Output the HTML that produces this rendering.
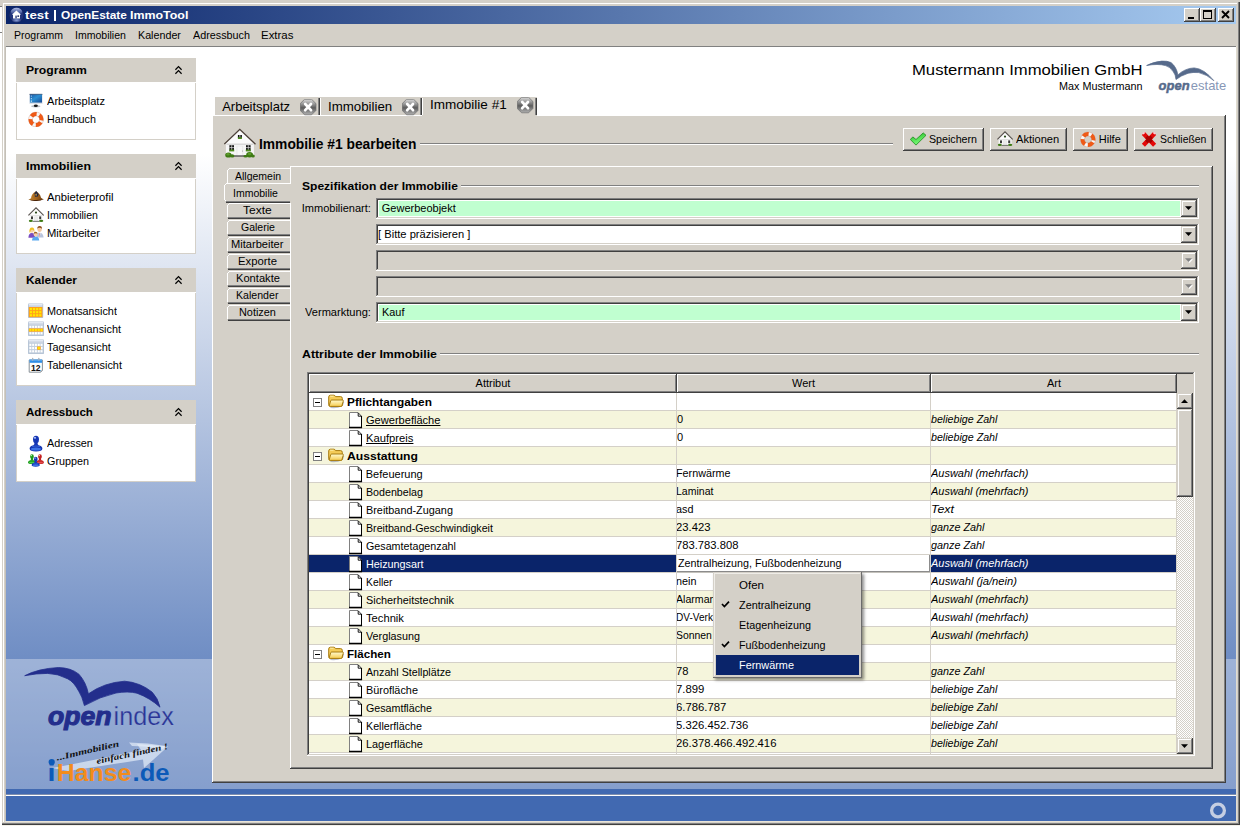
<!DOCTYPE html>
<html><head><meta charset="utf-8"><title>test | OpenEstate ImmoTool</title><style>
html,body{margin:0;padding:0}
body{width:1240px;height:826px;overflow:hidden;position:relative;background:#d4d0c8;font-family:"Liberation Sans",sans-serif;font-size:11px}
div,svg,span.t{position:absolute;display:block}
span.t{white-space:nowrap;transform-origin:0 50%}
</style></head><body>
<div style="left:3px;top:3px;width:1234px;height:1px;background:#ffffff"></div>
<div style="left:3px;top:3px;width:1px;height:819px;background:#ffffff"></div>
<div style="left:1238px;top:2px;width:1px;height:822px;background:#808080"></div>
<div style="left:1239px;top:2px;width:1px;height:823px;background:#404040"></div>
<div style="left:2px;top:823px;width:1237px;height:1px;background:#808080"></div>
<div style="left:2px;top:824px;width:1238px;height:1px;background:#404040"></div>
<div style="left:0px;top:825px;width:1240px;height:1px;background:#f4f2ea"></div>
<div style="left:0px;top:7px;width:2px;height:819px;background:#fff"></div>
<div style="left:0px;top:6px;width:2px;height:1px;background:#808080"></div>
<div style="left:0px;top:32px;width:2px;height:1px;background:#808080"></div>
<div style="left:6px;top:6px;width:1230px;height:18px;background:linear-gradient(to right,#0a246a 0%,#a6caf0 100%)"></div>
<svg style="left:9px;top:7px" width="15" height="16" viewBox="0 0 15 16"><defs><linearGradient id="tg" x1="0" y1="0" x2="0" y2="1"><stop offset="0" stop-color="#b8c6ee" stop-opacity="0.95"/><stop offset="1" stop-color="#6a80c0" stop-opacity="0.15"/></linearGradient><radialGradient id="tg2" cx="50%" cy="50%" r="50%"><stop offset="0" stop-color="#9fb6ec" stop-opacity="0.85"/><stop offset="1" stop-color="#9fb6ec" stop-opacity="0"/></radialGradient></defs>
<circle cx="7.5" cy="8" r="7.4" fill="#18265e"/><circle cx="7.5" cy="8" r="7" fill="#22347a"/><ellipse cx="7.5" cy="4.6" rx="5.6" ry="3.8" fill="url(#tg)"/><ellipse cx="7.5" cy="13.2" rx="5" ry="2.6" fill="url(#tg2)"/>
<path d="M7.4 3.6 L2.9 7.8 H4 V11.4 H11 V7.8 H12 Z" fill="#fff"/><rect x="6.3" y="8.6" width="1.5" height="2.8" fill="#3a4a86"/><rect x="8.4" y="8.4" width="1.7" height="1.5" fill="#1c2a60"/></svg>
<span class="t" style="left:24.98px;top:8px;font-size:11px;line-height:14px;color:#fff;font-weight:bold;transform:scaleX(1.2130);">test</span>
<div style="left:54px;top:10px;width:2px;height:11px;background:#fff"></div>
<span class="t" style="left:61.28px;top:8px;font-size:11px;line-height:14px;color:#fff;font-weight:bold;transform:scaleX(1.0783);">OpenEstate</span>
<span class="t" style="left:129.69px;top:8px;font-size:11px;line-height:14px;color:#fff;font-weight:bold;transform:scaleX(1.1275);">ImmoTool</span>
<div style="left:1184px;top:8px;width:16px;height:14px;background:#d4d0c8"></div>
<div style="left:1184px;top:8px;width:15px;height:1px;background:#ffffff"></div>
<div style="left:1184px;top:8px;width:1px;height:13px;background:#ffffff"></div>
<div style="left:1184px;top:21px;width:16px;height:1px;background:#404040"></div>
<div style="left:1199px;top:8px;width:1px;height:14px;background:#404040"></div>
<div style="left:1185px;top:20px;width:14px;height:1px;background:#808080"></div>
<div style="left:1198px;top:9px;width:1px;height:12px;background:#808080"></div>
<svg style="left:1184px;top:8px" width="16" height="14" viewBox="0 0 16 14"><rect x="4" y="9" width="6" height="2" fill="#000"/></svg>
<div style="left:1200px;top:8px;width:16px;height:14px;background:#d4d0c8"></div>
<div style="left:1200px;top:8px;width:15px;height:1px;background:#ffffff"></div>
<div style="left:1200px;top:8px;width:1px;height:13px;background:#ffffff"></div>
<div style="left:1200px;top:21px;width:16px;height:1px;background:#404040"></div>
<div style="left:1215px;top:8px;width:1px;height:14px;background:#404040"></div>
<div style="left:1201px;top:20px;width:14px;height:1px;background:#808080"></div>
<div style="left:1214px;top:9px;width:1px;height:12px;background:#808080"></div>
<svg style="left:1200px;top:8px" width="16" height="14" viewBox="0 0 16 14"><rect x="3.5" y="2.5" width="8" height="8" fill="none" stroke="#000"/><rect x="3" y="2" width="9" height="2" fill="#000"/></svg>
<div style="left:1218px;top:8px;width:16px;height:14px;background:#d4d0c8"></div>
<div style="left:1218px;top:8px;width:15px;height:1px;background:#ffffff"></div>
<div style="left:1218px;top:8px;width:1px;height:13px;background:#ffffff"></div>
<div style="left:1218px;top:21px;width:16px;height:1px;background:#404040"></div>
<div style="left:1233px;top:8px;width:1px;height:14px;background:#404040"></div>
<div style="left:1219px;top:20px;width:14px;height:1px;background:#808080"></div>
<div style="left:1232px;top:9px;width:1px;height:12px;background:#808080"></div>
<svg style="left:1218px;top:8px" width="16" height="14" viewBox="0 0 16 14"><path d="M4 3 L11 10 M11 3 L4 10" stroke="#000" stroke-width="1.9"/></svg>
<span class="t" style="left:13.79px;top:28px;font-size:11px;line-height:14px;color:#000;transform:scaleX(0.9530);">Programm</span>
<span class="t" style="left:75.28px;top:28px;font-size:11px;line-height:14px;color:#000;transform:scaleX(0.9576);">Immobilien</span>
<span class="t" style="left:137.78px;top:28px;font-size:11px;line-height:14px;color:#000;transform:scaleX(0.9746);">Kalender</span>
<span class="t" style="left:193.28px;top:28px;font-size:11px;line-height:14px;color:#000;transform:scaleX(0.9800);">Adressbuch</span>
<span class="t" style="left:261.29px;top:28px;font-size:11px;line-height:14px;color:#000;transform:scaleX(1.0398);">Extras</span>
<div style="left:6px;top:46px;width:1230px;height:1px;background:#808080"></div>
<div style="left:5px;top:46px;width:1px;height:776px;background:#c4c0b8"></div>
<div style="left:6px;top:47px;width:1230px;height:774px;background:linear-gradient(to bottom,#fff 0,#fff 107px,#4169b1 774px)"></div>
<div style="left:1236px;top:46px;width:1px;height:776px;background:#e0dcd0"></div>
<div style="left:5px;top:821px;width:1232px;height:1px;background:#e8e4d8"></div>
<div style="left:6px;top:659px;width:1230px;height:130px;background:rgba(255,255,255,0.33)"></div>
<div style="left:6px;top:789px;width:1230px;height:6px;background:#4169b1"></div>
<div style="left:6px;top:794px;width:1230px;height:1px;background:#7f8fae"></div>
<div style="left:6px;top:795px;width:1230px;height:1px;background:#fff"></div>
<div style="left:6px;top:796px;width:1230px;height:25px;background:#4169b1"></div>
<svg style="left:1208px;top:800px" width="20" height="20" viewBox="0 0 20 20"><circle cx="10" cy="10.5" r="6.4" fill="none" stroke="#c5cee2" stroke-width="3.3"/></svg>
<div style="left:16px;top:58px;width:180px;height:24px;background:#d4d0c8"></div>
<span class="t" style="left:25.79px;top:63px;font-size:11px;line-height:14px;color:#000;font-weight:bold;transform:scaleX(1.1072);">Programm</span>
<svg style="left:174px;top:65px" width="10" height="12" viewBox="0 0 10 12"><path d="M1.4 4.7 L4.5 1.6 L7.6 4.7 M1.4 8.7 L4.5 5.6 L7.6 8.7" fill="none" stroke="#000" stroke-width="1.25"/></svg>
<div style="left:16px;top:83px;width:180px;height:57px;background:#fff;border:1px solid #d4d0c8;border-top:none;box-sizing:border-box"></div>
<div style="left:16px;top:82px;width:180px;height:1px;background:#fff"></div>
<svg style="left:28px;top:93px" width="16" height="16" viewBox="0 0 16 16"><defs><linearGradient id="g1" x1="0" y1="0" x2="1" y2="1"><stop offset="0" stop-color="#1a58a4"/><stop offset="0.45" stop-color="#2d8fd2"/><stop offset="1" stop-color="#174a94"/></linearGradient></defs>
<ellipse cx="7.8" cy="13.3" rx="4.6" ry="1.1" fill="#b8bcc4"/><ellipse cx="7.8" cy="12.7" rx="2" ry="1.3" fill="#181818"/>
<rect x="1.3" y="0.7" width="13.3" height="10.4" rx="0.6" fill="#dfe3ea"/><rect x="1.6" y="0.9" width="12.7" height="0.9" fill="#2a3a58"/><rect x="1.9" y="1.6" width="12.1" height="8" fill="url(#g1)"/>
<rect x="2.8" y="2.6" width="1" height="1" fill="#cfe4f8"/><rect x="2.8" y="5.2" width="1" height="1" fill="#e8f2fc"/><rect x="2.8" y="7.6" width="1.1" height="1.1" fill="#f4f8fc"/></svg>
<span class="t" style="left:46.78px;top:94px;font-size:11px;line-height:14px;color:#000;transform:scaleX(1.0078);">Arbeitsplatz</span>
<svg style="left:28px;top:111px" width="16" height="16" viewBox="0 0 16 16"><g transform="rotate(15 8 8.5)"><circle cx="8" cy="8.5" r="5.5" fill="none" stroke="#f7f7f7" stroke-width="3.9"/><circle cx="8" cy="8.5" r="5.5" fill="none" stroke="#f05a16" stroke-width="3.9" stroke-dasharray="5.6 3.04" stroke-dashoffset="-1.52"/><circle cx="8" cy="8.5" r="7.45" fill="none" stroke="#c06848" stroke-opacity="0.5" stroke-width="0.5"/><circle cx="8" cy="8.5" r="3.55" fill="none" stroke="#a86048" stroke-opacity="0.5" stroke-width="0.5"/></g></svg>
<span class="t" style="left:46.78px;top:112px;font-size:11px;line-height:14px;color:#000;transform:scaleX(0.9756);">Handbuch</span>
<div style="left:16px;top:154px;width:180px;height:24px;background:#d4d0c8"></div>
<span class="t" style="left:25.79px;top:159px;font-size:11px;line-height:14px;color:#000;font-weight:bold;transform:scaleX(1.1183);">Immobilien</span>
<svg style="left:174px;top:161px" width="10" height="12" viewBox="0 0 10 12"><path d="M1.4 4.7 L4.5 1.6 L7.6 4.7 M1.4 8.7 L4.5 5.6 L7.6 8.7" fill="none" stroke="#000" stroke-width="1.25"/></svg>
<div style="left:16px;top:179px;width:180px;height:75px;background:#fff;border:1px solid #d4d0c8;border-top:none;box-sizing:border-box"></div>
<div style="left:16px;top:178px;width:180px;height:1px;background:#fff"></div>
<svg style="left:28px;top:189px" width="16" height="16" viewBox="0 0 16 16"><defs><linearGradient id="g2" x1="0" y1="0" x2="1" y2="0"><stop offset="0" stop-color="#c88a34"/><stop offset="0.45" stop-color="#a8681e"/><stop offset="1" stop-color="#6a3a10"/></linearGradient></defs>
<path d="M0.4 10.6 Q2 10.2 3 9.2 Q3.6 4.4 7.6 2.4 Q12 3.6 13 8.8 Q14.4 10 15.8 10.2 Q12 11.8 8 11.6 Q3.4 11.8 0.4 10.6 Z" fill="url(#g2)"/>
<path d="M0.4 10.6 Q3.4 11.2 8 11 Q12 11 15.8 10.2 Q12 12.2 8 12 Q3.4 12.2 0.4 10.6 Z" fill="#4a2408"/>
<path d="M6.6 4.2 L8.2 1.8 L9.4 3.6 L10.4 5.2 L9.8 7.4 L7 7.8 Z" fill="#1c2440"/><path d="M7.4 5 L8.6 4.6 L8.8 6.6 L7.6 6.8 Z" fill="#d8a040"/></svg>
<span class="t" style="left:46.78px;top:190px;font-size:11px;line-height:14px;color:#000;transform:scaleX(1.0247);">Anbieterprofil</span>
<svg style="left:28px;top:207px" width="16" height="16" viewBox="0 0 16 16"><path d="M1.6 8.2 H14.6 V14 H1.6 Z" fill="#f8f8f8"/><path d="M8 1.6 L1.2 8.4 H14.8 Z" fill="#fcfcfc"/><path d="M1.6 8.2 H14.6 V9 H1.6 Z" fill="#dcdcdc"/>
<path d="M0.4 8.4 L8 0.8 L15.7 8.5" fill="none" stroke="#55504c" stroke-width="1.05"/>
<rect x="6.3" y="9.4" width="3.4" height="4.8" fill="#e2e2e2"/><rect x="6.9" y="9.8" width="2.2" height="4.4" fill="#f6f6f6"/><path d="M8 9.8 V14" stroke="#c8c8c8" stroke-width="0.5"/>
<rect x="3" y="9.4" width="2" height="2.8" fill="#3a3a3a"/><rect x="11.2" y="9.4" width="2" height="2.8" fill="#3a3a3a"/><circle cx="8" cy="5.6" r="1.1" fill="#2c4a1c"/>
<path d="M4.6 14.4 H11.6" stroke="#555" stroke-width="0.8"/>
<ellipse cx="2.8" cy="13.9" rx="2" ry="1.1" fill="#3e7a14"/><ellipse cx="13.2" cy="13.9" rx="2.1" ry="1.1" fill="#3e7a14"/></svg>
<span class="t" style="left:46.78px;top:208px;font-size:11px;line-height:14px;color:#000;transform:scaleX(0.9576);">Immobilien</span>
<svg style="left:28px;top:225px" width="16" height="16" viewBox="0 0 16 16"><path d="M8.4 12.6 Q8.6 7.4 11.6 7.4 Q15.2 7.6 15.6 12.6 Z" fill="#b8c4dc"/><path d="M10.8 7.6 L11.7 12.6 L12.6 7.6 Z" fill="#fff"/><path d="M11.4 8.2 L11.7 12.4 L12.1 8.2 Z" fill="#d83030"/>
<ellipse cx="11.6" cy="4.3" rx="2.2" ry="2.7" fill="#f4c8a0"/><path d="M9.2 3.8 Q9.4 0.8 11.8 1 Q14.2 1.2 13.9 4 Q13 2.6 11.4 2.8 Q10 2.8 9.2 3.8Z" fill="#8a5020"/>
<path d="M0.4 12.8 Q0.6 8 3.8 8 Q7 8 7.2 12.8 Z" fill="#7a4cc0"/><ellipse cx="3.9" cy="5.4" rx="2" ry="2.4" fill="#f8d0a8"/><path d="M1.4 7.6 Q1 2.6 4 2.6 Q6.8 2.8 6.4 7.4 Q5.8 4.6 4 4.4 Q2.2 4.6 2.2 7.6 Z" fill="#f0c020"/>
<path d="M4 15.6 Q4.2 11.6 7.6 11.6 Q11 11.6 11.2 15.6 Z" fill="#58a8f0"/><ellipse cx="7.6" cy="9.3" rx="1.9" ry="2.2" fill="#f8d0a8"/><path d="M5.6 9 Q5.8 6.6 7.8 6.8 Q9.8 7 9.5 9.2 Q8.8 8 7.6 8.2 Q6.4 8.2 5.6 9Z" fill="#9a6024"/></svg>
<span class="t" style="left:46.78px;top:226px;font-size:11px;line-height:14px;color:#000;transform:scaleX(1.0185);">Mitarbeiter</span>
<div style="left:16px;top:268px;width:180px;height:24px;background:#d4d0c8"></div>
<span class="t" style="left:25.79px;top:273px;font-size:11px;line-height:14px;color:#000;font-weight:bold;transform:scaleX(1.0818);">Kalender</span>
<svg style="left:174px;top:275px" width="10" height="12" viewBox="0 0 10 12"><path d="M1.4 4.7 L4.5 1.6 L7.6 4.7 M1.4 8.7 L4.5 5.6 L7.6 8.7" fill="none" stroke="#000" stroke-width="1.25"/></svg>
<div style="left:16px;top:293px;width:180px;height:93px;background:#fff;border:1px solid #d4d0c8;border-top:none;box-sizing:border-box"></div>
<div style="left:16px;top:292px;width:180px;height:1px;background:#fff"></div>
<svg style="left:28px;top:303px" width="16" height="16" viewBox="0 0 16 16"><rect x="0" y="0.4" width="15.2" height="14.6" rx="0.8" fill="#b4c2d4"/><rect x="0.8" y="1.1" width="13.6" height="2.6" fill="#d4dce8"/><rect x="0.8" y="1.1" width="13.6" height="0.8" fill="#e8eef6"/><rect x="0.8" y="4" width="13.6" height="10.2" fill="#ffa21a"/><rect x="1.90" y="5.00" width="2.1" height="2.1" fill="#ffe800"/><rect x="5.00" y="5.00" width="2.1" height="2.1" fill="#ffe800"/><rect x="8.10" y="5.00" width="2.1" height="2.1" fill="#ffe800"/><rect x="11.20" y="5.00" width="2.1" height="2.1" fill="#ffe800"/><rect x="1.90" y="8.10" width="2.1" height="2.1" fill="#ffe800"/><rect x="5.00" y="8.10" width="2.1" height="2.1" fill="#ffe800"/><rect x="8.10" y="8.10" width="2.1" height="2.1" fill="#ffe800"/><rect x="11.20" y="8.10" width="2.1" height="2.1" fill="#ffe800"/><rect x="1.90" y="11.20" width="2.1" height="2.1" fill="#ffe800"/><rect x="5.00" y="11.20" width="2.1" height="2.1" fill="#ffe800"/><rect x="8.10" y="11.20" width="2.1" height="2.1" fill="#ffe800"/><rect x="11.20" y="11.20" width="2.1" height="2.1" fill="#ffe800"/></svg>
<span class="t" style="left:46.78px;top:304px;font-size:11px;line-height:14px;color:#000;transform:scaleX(0.9858);">Monatsansicht</span>
<svg style="left:28px;top:321px" width="16" height="16" viewBox="0 0 16 16"><rect x="0" y="0.4" width="16" height="14.6" rx="0.8" fill="#b4c2d4"/><rect x="0.8" y="1.1" width="14.4" height="2.6" fill="#d4dce8"/><rect x="0.8" y="1.1" width="14.4" height="0.8" fill="#e8eef6"/><rect x="0.8" y="4" width="14.4" height="10.2" fill="#c4d0de"/><rect x="1.40" y="4.80" width="1.9" height="2.1" fill="#ffffff"/><rect x="4.20" y="4.80" width="1.9" height="2.1" fill="#ffffff"/><rect x="7.00" y="4.80" width="1.9" height="2.1" fill="#ffffff"/><rect x="9.80" y="4.80" width="1.9" height="2.1" fill="#ffffff"/><rect x="12.60" y="4.80" width="1.9" height="2.1" fill="#ffffff"/><rect x="1.40" y="8.00" width="1.9" height="2.1" fill="#ffffff"/><rect x="4.20" y="8.00" width="1.9" height="2.1" fill="#ffffff"/><rect x="7.00" y="8.00" width="1.9" height="2.1" fill="#ffffff"/><rect x="9.80" y="8.00" width="1.9" height="2.1" fill="#ffffff"/><rect x="12.60" y="8.00" width="1.9" height="2.1" fill="#ffffff"/><rect x="1.40" y="11.20" width="1.9" height="2.1" fill="#ffffff"/><rect x="4.20" y="11.20" width="1.9" height="2.1" fill="#ffffff"/><rect x="7.00" y="11.20" width="1.9" height="2.1" fill="#ffffff"/><rect x="9.80" y="11.20" width="1.9" height="2.1" fill="#ffffff"/><rect x="12.60" y="11.20" width="1.9" height="2.1" fill="#ffffff"/><rect x="0.8" y="7.4" width="14.4" height="3.3" fill="#ffa21a"/><rect x="1.40" y="8.00" width="1.9" height="2.1" fill="#ffe800"/><rect x="4.20" y="8.00" width="1.9" height="2.1" fill="#ffe800"/><rect x="7.00" y="8.00" width="1.9" height="2.1" fill="#ffe800"/><rect x="9.80" y="8.00" width="1.9" height="2.1" fill="#ffe800"/><rect x="12.60" y="8.00" width="1.9" height="2.1" fill="#ffe800"/></svg>
<span class="t" style="left:46.78px;top:322px;font-size:11px;line-height:14px;color:#000;transform:scaleX(0.9855);">Wochenansicht</span>
<svg style="left:28px;top:339px" width="16" height="16" viewBox="0 0 16 16"><rect x="0" y="0.4" width="16" height="14.6" rx="0.8" fill="#b4c2d4"/><rect x="0.8" y="1.1" width="14.4" height="2.6" fill="#d4dce8"/><rect x="0.8" y="1.1" width="14.4" height="0.8" fill="#e8eef6"/><rect x="0.8" y="4" width="14.4" height="10.2" fill="#c4d0de"/><rect x="1.40" y="4.80" width="1.9" height="2.1" fill="#ffffff"/><rect x="4.20" y="4.80" width="1.9" height="2.1" fill="#ffffff"/><rect x="7.00" y="4.80" width="1.9" height="2.1" fill="#ffffff"/><rect x="9.80" y="4.80" width="1.9" height="2.1" fill="#ffffff"/><rect x="12.60" y="4.80" width="1.9" height="2.1" fill="#ffffff"/><rect x="1.40" y="8.00" width="1.9" height="2.1" fill="#ffffff"/><rect x="4.20" y="8.00" width="1.9" height="2.1" fill="#ffffff"/><rect x="7.00" y="8.00" width="1.9" height="2.1" fill="#ffffff"/><rect x="12.60" y="8.00" width="1.9" height="2.1" fill="#ffffff"/><rect x="1.40" y="11.20" width="1.9" height="2.1" fill="#ffffff"/><rect x="4.20" y="11.20" width="1.9" height="2.1" fill="#ffffff"/><rect x="7.00" y="11.20" width="1.9" height="2.1" fill="#ffffff"/><rect x="9.80" y="11.20" width="1.9" height="2.1" fill="#ffffff"/><rect x="12.60" y="11.20" width="1.9" height="2.1" fill="#ffffff"/><rect x="9.1" y="7.4" width="3.6" height="3.4" fill="#ffa21a"/><rect x="9.9" y="8.1" width="2" height="2" fill="#ffe800"/></svg>
<span class="t" style="left:46.78px;top:340px;font-size:11px;line-height:14px;color:#000;transform:scaleX(0.9955);">Tagesansicht</span>
<svg style="left:28px;top:357px" width="16" height="16" viewBox="0 0 16 16"><path d="M1.2 3 H14.4 V13.6 L12.4 15.2 H1.2 Z" fill="#fdfdfd" stroke="#7c848c" stroke-width="0.9"/><path d="M14.4 13.4 H12.4 V15.2 Z" fill="#9aa0a8"/><rect x="1.5" y="2.6" width="12.6" height="3.2" fill="#2f8ee6"/><rect x="1.5" y="2.6" width="12.6" height="1" fill="#6cb4f4"/><rect x="4" y="0.8" width="1.2" height="3" rx="0.5" fill="#a8b0bc"/><rect x="10.2" y="0.8" width="1.2" height="3" rx="0.5" fill="#a8b0bc"/><text x="7.7" y="13.6" font-family="Liberation Sans" font-size="8.6" font-weight="bold" text-anchor="middle" fill="#101010">12</text></svg>
<span class="t" style="left:46.78px;top:358px;font-size:11px;line-height:14px;color:#000;transform:scaleX(0.9880);">Tabellenansicht</span>
<div style="left:16px;top:400px;width:180px;height:24px;background:#d4d0c8"></div>
<span class="t" style="left:25.79px;top:405px;font-size:11px;line-height:14px;color:#000;font-weight:bold;transform:scaleX(1.0527);">Adressbuch</span>
<svg style="left:174px;top:407px" width="10" height="12" viewBox="0 0 10 12"><path d="M1.4 4.7 L4.5 1.6 L7.6 4.7 M1.4 8.7 L4.5 5.6 L7.6 8.7" fill="none" stroke="#000" stroke-width="1.25"/></svg>
<div style="left:16px;top:425px;width:180px;height:57px;background:#fff;border:1px solid #d4d0c8;border-top:none;box-sizing:border-box"></div>
<div style="left:16px;top:424px;width:180px;height:1px;background:#fff"></div>
<svg style="left:28px;top:435px" width="16" height="17" viewBox="0 0 16 17"><g transform="translate(0,0.2) scale(1.0)"><path d="M8 0.6 Q11 0.6 11 4.2 Q11 6.6 9.6 7.8 Q9.4 9.4 10.6 10 Q14.4 10.8 14.4 13.6 Q14.2 16.2 8 16.2 Q1.8 16.2 1.6 13.6 Q1.6 10.8 5.4 10 Q6.6 9.4 6.4 7.8 Q5 6.6 5 4.2 Q5 0.6 8 0.6 Z" fill="#1636b4"/><ellipse cx="8" cy="13.8" rx="5" ry="1.5" fill="#4a86f4" opacity="0.75"/><ellipse cx="7" cy="2.6" rx="1.1" ry="0.9" fill="#b8d0ff"/><path d="M4 11.4 Q8 10.2 12 11.4" stroke="#4a86f4" stroke-width="0.7" fill="none" opacity="0.7"/></g></svg>
<span class="t" style="left:46.78px;top:436px;font-size:11px;line-height:14px;color:#000;transform:scaleX(0.9881);">Adressen</span>
<svg style="left:28px;top:453px" width="16" height="16" viewBox="0 0 16 16"><g transform="translate(-1.0,1.0) scale(0.62)"><path d="M8 0.6 Q11 0.6 11 4.2 Q11 6.6 9.6 7.8 Q9.4 9.4 10.6 10 Q14.4 10.8 14.4 13.6 Q14.2 16.2 8 16.2 Q1.8 16.2 1.6 13.6 Q1.6 10.8 5.4 10 Q6.6 9.4 6.4 7.8 Q5 6.6 5 4.2 Q5 0.6 8 0.6 Z" fill="#1c981c"/><ellipse cx="8" cy="13.8" rx="5" ry="1.5" fill="#58e058" opacity="0.75"/><ellipse cx="7" cy="2.6" rx="1.1" ry="0.9" fill="#c8ffc8"/><path d="M4 11.4 Q8 10.2 12 11.4" stroke="#58e058" stroke-width="0.7" fill="none" opacity="0.7"/></g><g transform="translate(7.0,1.0) scale(0.62)"><path d="M8 0.6 Q11 0.6 11 4.2 Q11 6.6 9.6 7.8 Q9.4 9.4 10.6 10 Q14.4 10.8 14.4 13.6 Q14.2 16.2 8 16.2 Q1.8 16.2 1.6 13.6 Q1.6 10.8 5.4 10 Q6.6 9.4 6.4 7.8 Q5 6.6 5 4.2 Q5 0.6 8 0.6 Z" fill="#c42020"/><ellipse cx="8" cy="13.8" rx="5" ry="1.5" fill="#f06060" opacity="0.75"/><ellipse cx="7" cy="2.6" rx="1.1" ry="0.9" fill="#ffd0d0"/><path d="M4 11.4 Q8 10.2 12 11.4" stroke="#f06060" stroke-width="0.7" fill="none" opacity="0.7"/></g><g transform="translate(2.6,3.4) scale(0.64)"><path d="M8 0.6 Q11 0.6 11 4.2 Q11 6.6 9.6 7.8 Q9.4 9.4 10.6 10 Q14.4 10.8 14.4 13.6 Q14.2 16.2 8 16.2 Q1.8 16.2 1.6 13.6 Q1.6 10.8 5.4 10 Q6.6 9.4 6.4 7.8 Q5 6.6 5 4.2 Q5 0.6 8 0.6 Z" fill="#1636b4"/><ellipse cx="8" cy="13.8" rx="5" ry="1.5" fill="#4a86f4" opacity="0.75"/><ellipse cx="7" cy="2.6" rx="1.1" ry="0.9" fill="#b8d0ff"/><path d="M4 11.4 Q8 10.2 12 11.4" stroke="#4a86f4" stroke-width="0.7" fill="none" opacity="0.7"/></g></svg>
<span class="t" style="left:46.78px;top:454px;font-size:11px;line-height:14px;color:#000;transform:scaleX(0.9794);">Gruppen</span>
<svg style="left:16px;top:660px" width="180" height="130" viewBox="0 0 180 130">
<path d="M8.7 15.7 Q22 8.6 42.5 7.5 Q55 7.8 62.9 14.2 Q70 22 72.4 33.8 Q88 22.6 108.6 21.2 Q124 22.4 136 32 Q142 38 144 47.2 Q134 38 121 33.2 Q112 31 100 33 Q84 36.6 68.4 45.6 Q66 36 62.9 31.5 Q58 22 51.9 18.9 Q42 13.6 31.5 13.4 Q20 13.4 8.7 15.7 Z" fill="#232e8c" stroke="#232e8c" stroke-width="0.8" stroke-linejoin="round"/>
<text x="32" y="65.3" font-family="Liberation Sans" font-size="25.6" font-weight="bold" font-style="italic" fill="#232e8c" stroke="#232e8c" stroke-width="1.1" textLength="63.5" lengthAdjust="spacingAndGlyphs">open</text>
<text x="97.6" y="65.3" font-family="Liberation Sans" font-size="25.2" fill="#2a3596" stroke="#9db0d8" stroke-width="0.25" textLength="60.2" lengthAdjust="spacingAndGlyphs">index</text>
<path d="M36 108 Q80 100 125 90 L121 84 L152 86.6 L128 108 L127 99.4 Q86 106 52 111 Z" fill="#e4ecf8" fill-opacity="0.7"/>
<path d="M113 82.4 Q132 82.6 150 86 L147 89 Q130 86 116 86 Z" fill="#e4ecf8" fill-opacity="0.7"/>
<text x="31.6" y="121.2" font-family="Liberation Sans" font-size="24.4" font-weight="bold" fill="#0c5ab8" textLength="8" lengthAdjust="spacingAndGlyphs">i</text>
<circle cx="35.7" cy="102" r="3.1" fill="#0c5ab8"/>
<text x="40.8" y="121.2" font-family="Liberation Sans" font-size="24.4" font-weight="bold" fill="#f28c1c" textLength="74.5" lengthAdjust="spacingAndGlyphs">Hanse</text>
<text x="116.6" y="121.2" font-family="Liberation Sans" font-size="24.4" font-weight="bold" fill="#0c5ab8" textLength="37" lengthAdjust="spacingAndGlyphs">.de</text>
<g transform="rotate(-13 42 100)"><text x="41" y="100.4" font-family="Liberation Serif" font-size="8.6" font-weight="bold" font-style="italic" fill="#101010" textLength="64" lengthAdjust="spacingAndGlyphs">...Immobilien</text></g>
<g transform="rotate(-12 81 103.5)"><text x="81" y="104" font-family="Liberation Serif" font-size="8.6" font-weight="bold" font-style="italic" fill="#101010" textLength="73" lengthAdjust="spacingAndGlyphs">einfach finden !</text></g>
</svg>
<span class="t" style="left:912.02px;top:61px;font-size:15px;line-height:18px;color:#000;transform:scaleX(1.1103);">Mustermann Immobilien GmbH</span>
<span class="t" style="left:1058.79px;top:79px;font-size:11px;line-height:14px;color:#000;transform:scaleX(0.9817);">Max Mustermann</span>
<svg style="left:1140px;top:54px" width="96" height="44" viewBox="0 0 96 44"><path d="M6.6 11.5 Q13 8 21.7 7.1 Q27 6.8 31 8.5 Q36.6 13 37.9 20.9 Q45 14.2 54.2 13.9 Q64 14.6 73.9 26.7 Q67 20.4 58.8 18.6 Q53 18 48 19.3 Q41 21.6 36 25.5 Q35.6 20.4 33.3 17.8 Q30 12.6 25.5 11.6 Q18 9.4 6.6 11.5 Z" fill="#566a8b" stroke="#566a8b" stroke-width="0.7" stroke-linejoin="round"/>
<text x="18.6" y="35.9" font-family="Liberation Sans" font-size="13.2" font-weight="bold" font-style="italic" fill="#566a8b" stroke="#566a8b" stroke-width="0.5" textLength="31" lengthAdjust="spacingAndGlyphs">open</text>
<text x="50.8" y="35.9" font-family="Liberation Sans" font-size="13.2" fill="#8797b6" textLength="35.4" lengthAdjust="spacingAndGlyphs">estate</text></svg>
<div style="left:212px;top:115px;width:1014px;height:668px;background:#d4d0c8"></div>
<div style="left:212px;top:115px;width:1013px;height:1px;background:#ffffff"></div>
<div style="left:212px;top:115px;width:1px;height:667px;background:#ffffff"></div>
<div style="left:1224px;top:116px;width:1px;height:667px;background:#808080"></div>
<div style="left:1225px;top:115px;width:1px;height:668px;background:#404040"></div>
<div style="left:213px;top:781px;width:1012px;height:1px;background:#808080"></div>
<div style="left:212px;top:782px;width:1014px;height:1px;background:#404040"></div>
<div style="left:215px;top:97px;width:105px;height:18px;background:#d4d0c8"></div>
<div style="left:318px;top:98px;width:1px;height:17px;background:#808080"></div>
<div style="left:319px;top:98px;width:1px;height:17px;background:#404040"></div>
<span class="t" style="left:222.16px;top:99px;font-size:13px;line-height:16px;color:#000;">Arbeitsplatz</span>
<svg style="left:300px;top:99px" width="17" height="17" viewBox="0 0 17 17"><defs><linearGradient id="g3" x1="0" y1="0" x2="0" y2="1"><stop offset="0" stop-color="#d8d8d8"/><stop offset="0.25" stop-color="#a4a4a4"/><stop offset="0.55" stop-color="#5c5c5c"/><stop offset="0.8" stop-color="#8c8c8c"/><stop offset="1" stop-color="#b0b0b0"/></linearGradient></defs><path d="M4.6 0.3 H11.6 L16 4.6 V11.4 L11.6 15.8 H4.6 L0.2 11.4 V4.6 Z" fill="url(#g3)" stroke="#6e6e6e" stroke-width="0.7"/><path d="M5.2 5 L11 11.2 M11 5 L5.2 11.2" stroke="#fff" stroke-width="2.7" stroke-linecap="round"/></svg>
<div style="left:320px;top:97px;width:102px;height:18px;background:#d4d0c8"></div>
<div style="left:420px;top:98px;width:1px;height:17px;background:#808080"></div>
<div style="left:421px;top:98px;width:1px;height:17px;background:#404040"></div>
<div style="left:320px;top:98px;width:1px;height:17px;background:#ffffff"></div>
<span class="t" style="left:327.65px;top:99px;font-size:13px;line-height:16px;color:#000;transform:scaleX(1.0212);">Immobilien</span>
<svg style="left:402px;top:99px" width="17" height="17" viewBox="0 0 17 17"><defs><linearGradient id="g4" x1="0" y1="0" x2="0" y2="1"><stop offset="0" stop-color="#d8d8d8"/><stop offset="0.25" stop-color="#a4a4a4"/><stop offset="0.55" stop-color="#5c5c5c"/><stop offset="0.8" stop-color="#8c8c8c"/><stop offset="1" stop-color="#b0b0b0"/></linearGradient></defs><path d="M4.6 0.3 H11.6 L16 4.6 V11.4 L11.6 15.8 H4.6 L0.2 11.4 V4.6 Z" fill="url(#g4)" stroke="#6e6e6e" stroke-width="0.7"/><path d="M5.2 5 L11 11.2 M11 5 L5.2 11.2" stroke="#fff" stroke-width="2.7" stroke-linecap="round"/></svg>
<div style="left:422px;top:97px;width:115px;height:19px;background:#d4d0c8"></div>
<div style="left:535px;top:98px;width:1px;height:17px;background:#808080"></div>
<div style="left:536px;top:98px;width:1px;height:17px;background:#404040"></div>
<div style="left:422px;top:98px;width:1px;height:17px;background:#ffffff"></div>
<span class="t" style="left:430.15px;top:97px;font-size:13px;line-height:16px;color:#000;transform:scaleX(1.0405);">Immobilie #1</span>
<svg style="left:517px;top:97px" width="17" height="17" viewBox="0 0 17 17"><defs><linearGradient id="g5" x1="0" y1="0" x2="0" y2="1"><stop offset="0" stop-color="#d8d8d8"/><stop offset="0.25" stop-color="#a4a4a4"/><stop offset="0.55" stop-color="#5c5c5c"/><stop offset="0.8" stop-color="#8c8c8c"/><stop offset="1" stop-color="#b0b0b0"/></linearGradient></defs><path d="M4.6 0.3 H11.6 L16 4.6 V11.4 L11.6 15.8 H4.6 L0.2 11.4 V4.6 Z" fill="url(#g5)" stroke="#6e6e6e" stroke-width="0.7"/><path d="M5.2 5 L11 11.2 M11 5 L5.2 11.2" stroke="#fff" stroke-width="2.7" stroke-linecap="round"/></svg>
<svg style="left:224px;top:128px" width="32" height="32" viewBox="0 0 32 32"><g transform="translate(0,-1.4)"><path d="M1.9 17 H29.9 V29 H1.9 Z" fill="#f6f6f6"/><path d="M15.8 4 L1.6 17.2 H30 Z" fill="#fbfbfb"/>
<path d="M2.4 17 H29.4 V18.4 H2.4 Z" fill="#d8d8d8"/>
<path d="M0.3 17.4 L15.8 2.8 L31.5 17.6" fill="none" stroke="#4a3e38" stroke-width="1.25" stroke-linejoin="miter"/>
<rect x="12.4" y="19.2" width="6.8" height="10" fill="#e9e9e9"/><rect x="13.4" y="19.8" width="4.8" height="9.2" fill="#f7f7f7"/><rect x="18" y="24" width="0.8" height="0.9" fill="#8a8a8a"/>
<rect x="5.4" y="18.6" width="4.6" height="5.4" fill="#141414"/><path d="M7.7 18.6 V24 M5.4 21 H10" stroke="#e8e8e8" stroke-width="0.7"/><rect x="5.2" y="23" width="5" height="1.8" fill="#4e8a1e"/>
<rect x="22" y="18.6" width="4.6" height="5.4" fill="#141414"/><path d="M24.3 18.6 V24 M22 21 H26.6" stroke="#e8e8e8" stroke-width="0.7"/><rect x="21.8" y="23" width="5" height="1.8" fill="#4e8a1e"/>
<rect x="13.9" y="8.4" width="4" height="3" fill="#141414"/><path d="M15.9 8.4 V11" stroke="#f0f0f0" stroke-width="0.8"/><rect x="13.9" y="10.6" width="4" height="1.8" fill="#4e8a1e"/>
<path d="M9 29.4 H23" stroke="#3c3c3c" stroke-width="1.2"/>
<ellipse cx="4.4" cy="28.4" rx="3.2" ry="2.6" fill="#3e7a14"/><ellipse cx="8.2" cy="29.3" rx="2.2" ry="1.7" fill="#3e7a14"/><ellipse cx="4" cy="27.6" rx="1.6" ry="1.2" fill="#5c9a2a"/>
<ellipse cx="25.6" cy="28.2" rx="3.4" ry="2.7" fill="#3e7a14"/><ellipse cx="21.6" cy="29.6" rx="2.2" ry="1.3" fill="#3e7a14"/><ellipse cx="29" cy="29.5" rx="1.8" ry="1.5" fill="#3e7a14"/><ellipse cx="25.6" cy="27.4" rx="1.7" ry="1.2" fill="#5c9a2a"/></g></svg>
<span class="t" style="left:258.59px;top:135px;font-size:14px;line-height:18px;color:#000;font-weight:bold;transform:scaleX(0.9863);">Immobilie #1 bearbeiten</span>
<div style="left:420px;top:143px;width:473px;height:1px;background:#808080"></div>
<div style="left:420px;top:144px;width:473px;height:1px;background:#ffffff"></div>
<div style="left:903px;top:128px;width:81px;height:23px;background:#d4d0c8"></div>
<div style="left:903px;top:128px;width:80px;height:1px;background:#ffffff"></div>
<div style="left:903px;top:128px;width:1px;height:22px;background:#ffffff"></div>
<div style="left:903px;top:150px;width:81px;height:1px;background:#404040"></div>
<div style="left:983px;top:128px;width:1px;height:23px;background:#404040"></div>
<div style="left:904px;top:149px;width:79px;height:1px;background:#808080"></div>
<div style="left:982px;top:129px;width:1px;height:21px;background:#808080"></div>
<svg style="left:910px;top:131px" width="17" height="16" viewBox="0 0 17 16"><defs><linearGradient id="g6" x1="0" y1="0" x2="0.4" y2="1"><stop offset="0" stop-color="#1ea81e"/><stop offset="0.6" stop-color="#58e458"/><stop offset="1" stop-color="#7cf87c"/></linearGradient></defs><path d="M0.3 8.5 L2.8 5.9 L6 8.5 L13.2 1.9 L16 4.3 L6 14.1 Z" fill="url(#g6)" stroke="#1a8c1a" stroke-width="0.8" stroke-linejoin="round"/></svg>
<span class="t" style="left:928.88px;top:132px;font-size:11px;line-height:14px;color:#000;transform:scaleX(0.9694);">Speichern</span>
<div style="left:990px;top:128px;width:77px;height:23px;background:#d4d0c8"></div>
<div style="left:990px;top:128px;width:76px;height:1px;background:#ffffff"></div>
<div style="left:990px;top:128px;width:1px;height:22px;background:#ffffff"></div>
<div style="left:990px;top:150px;width:77px;height:1px;background:#404040"></div>
<div style="left:1066px;top:128px;width:1px;height:23px;background:#404040"></div>
<div style="left:991px;top:149px;width:75px;height:1px;background:#808080"></div>
<div style="left:1065px;top:129px;width:1px;height:21px;background:#808080"></div>
<svg style="left:997px;top:131px" width="16" height="16" viewBox="0 0 16 16"><path d="M1.6 8.2 H14.6 V14 H1.6 Z" fill="#f8f8f8"/><path d="M8 1.6 L1.2 8.4 H14.8 Z" fill="#fcfcfc"/><path d="M1.6 8.2 H14.6 V9 H1.6 Z" fill="#dcdcdc"/>
<path d="M0.4 8.4 L8 0.8 L15.7 8.5" fill="none" stroke="#55504c" stroke-width="1.05"/>
<rect x="6.3" y="9.4" width="3.4" height="4.8" fill="#e2e2e2"/><rect x="6.9" y="9.8" width="2.2" height="4.4" fill="#f6f6f6"/><path d="M8 9.8 V14" stroke="#c8c8c8" stroke-width="0.5"/>
<rect x="3" y="9.4" width="2" height="2.8" fill="#3a3a3a"/><rect x="11.2" y="9.4" width="2" height="2.8" fill="#3a3a3a"/><circle cx="8" cy="5.6" r="1.1" fill="#2c4a1c"/>
<path d="M4.6 14.4 H11.6" stroke="#555" stroke-width="0.8"/>
<ellipse cx="2.8" cy="13.9" rx="2" ry="1.1" fill="#3e7a14"/><ellipse cx="13.2" cy="13.9" rx="2.1" ry="1.1" fill="#3e7a14"/></svg>
<span class="t" style="left:1015.99px;top:132px;font-size:11px;line-height:14px;color:#000;transform:scaleX(1.0098);">Aktionen</span>
<div style="left:1073px;top:128px;width:55px;height:23px;background:#d4d0c8"></div>
<div style="left:1073px;top:128px;width:54px;height:1px;background:#ffffff"></div>
<div style="left:1073px;top:128px;width:1px;height:22px;background:#ffffff"></div>
<div style="left:1073px;top:150px;width:55px;height:1px;background:#404040"></div>
<div style="left:1127px;top:128px;width:1px;height:23px;background:#404040"></div>
<div style="left:1074px;top:149px;width:53px;height:1px;background:#808080"></div>
<div style="left:1126px;top:129px;width:1px;height:21px;background:#808080"></div>
<svg style="left:1080px;top:131px" width="16" height="16" viewBox="0 0 16 16"><g transform="rotate(15 8 8.5)"><circle cx="8" cy="8.5" r="5.5" fill="none" stroke="#f7f7f7" stroke-width="3.9"/><circle cx="8" cy="8.5" r="5.5" fill="none" stroke="#f05a16" stroke-width="3.9" stroke-dasharray="5.6 3.04" stroke-dashoffset="-1.52"/><circle cx="8" cy="8.5" r="7.45" fill="none" stroke="#c06848" stroke-opacity="0.5" stroke-width="0.5"/><circle cx="8" cy="8.5" r="3.55" fill="none" stroke="#a86048" stroke-opacity="0.5" stroke-width="0.5"/></g></svg>
<span class="t" style="left:1098.79px;top:132px;font-size:11px;line-height:14px;color:#000;">Hilfe</span>
<div style="left:1134px;top:128px;width:79px;height:23px;background:#d4d0c8"></div>
<div style="left:1134px;top:128px;width:78px;height:1px;background:#ffffff"></div>
<div style="left:1134px;top:128px;width:1px;height:22px;background:#ffffff"></div>
<div style="left:1134px;top:150px;width:79px;height:1px;background:#404040"></div>
<div style="left:1212px;top:128px;width:1px;height:23px;background:#404040"></div>
<div style="left:1135px;top:149px;width:77px;height:1px;background:#808080"></div>
<div style="left:1211px;top:129px;width:1px;height:21px;background:#808080"></div>
<svg style="left:1141px;top:131px" width="16" height="17" viewBox="0 0 16 17"><path d="M2.4 2.6 L13.6 14.2 M13.6 2.6 L2.4 14.2" stroke="#e40808" stroke-width="4.3" stroke-linecap="butt"/><path d="M5.4 5.8 L10.6 11 M10.6 5.8 L5.4 11" stroke="#a80000" stroke-width="3.4"/><path d="M2 3 L3.6 1.4 M12.4 1.4 L14 3" stroke="#ffc4d0" stroke-width="1.6"/></svg>
<span class="t" style="left:1159.79px;top:132px;font-size:11px;line-height:14px;color:#000;transform:scaleX(0.9491);">Schließen</span>
<div style="left:290px;top:166px;width:923px;height:603px;background:#d4d0c8"></div>
<div style="left:290px;top:166px;width:922px;height:1px;background:#ffffff"></div>
<div style="left:290px;top:166px;width:1px;height:602px;background:#ffffff"></div>
<div style="left:1211px;top:167px;width:1px;height:602px;background:#808080"></div>
<div style="left:1212px;top:166px;width:1px;height:603px;background:#404040"></div>
<div style="left:291px;top:767px;width:921px;height:1px;background:#808080"></div>
<div style="left:290px;top:768px;width:923px;height:1px;background:#404040"></div>
<div style="left:229px;top:168px;width:61px;height:1px;background:#ffffff"></div>
<div style="left:227px;top:170px;width:1px;height:13px;background:#ffffff"></div>
<div style="left:228px;top:169px;width:1px;height:1px;background:#fff"></div>
<span class="t" style="left:235.09px;top:169px;font-size:11px;line-height:14px;color:#000;transform:scaleX(0.9548);">Allgemein</span>
<div style="left:224px;top:183px;width:67px;height:20px;background:#d4d0c8"></div>
<div style="left:226px;top:183px;width:65px;height:1px;background:#ffffff"></div>
<div style="left:224px;top:185px;width:1px;height:15px;background:#ffffff"></div>
<div style="left:225px;top:184px;width:1px;height:1px;background:#fff"></div>
<div style="left:225px;top:200px;width:1px;height:1px;background:#fff"></div>
<div style="left:226px;top:201px;width:64px;height:1px;background:#808080"></div>
<div style="left:226px;top:202px;width:64px;height:1px;background:#404040"></div>
<span class="t" style="left:233.09px;top:186px;font-size:11px;line-height:14px;color:#000;transform:scaleX(0.9544);">Immobilie</span>
<div style="left:229px;top:203px;width:61px;height:1px;background:#ffffff"></div>
<div style="left:227px;top:205px;width:1px;height:12px;background:#ffffff"></div>
<div style="left:228px;top:204px;width:1px;height:1px;background:#fff"></div>
<div style="left:229px;top:217px;width:61px;height:1px;background:#808080"></div>
<div style="left:228px;top:218px;width:62px;height:1px;background:#404040"></div>
<div style="left:228px;top:217px;width:1px;height:1px;background:#808080"></div>
<span class="t" style="left:243.28px;top:203px;font-size:11px;line-height:14px;color:#000;transform:scaleX(1.0925);">Texte</span>
<div style="left:229px;top:220px;width:61px;height:1px;background:#ffffff"></div>
<div style="left:227px;top:222px;width:1px;height:12px;background:#ffffff"></div>
<div style="left:228px;top:221px;width:1px;height:1px;background:#fff"></div>
<div style="left:229px;top:234px;width:61px;height:1px;background:#808080"></div>
<div style="left:228px;top:235px;width:62px;height:1px;background:#404040"></div>
<div style="left:228px;top:234px;width:1px;height:1px;background:#808080"></div>
<span class="t" style="left:240.78px;top:220px;font-size:11px;line-height:14px;color:#000;transform:scaleX(0.9566);">Galerie</span>
<div style="left:229px;top:237px;width:61px;height:1px;background:#ffffff"></div>
<div style="left:227px;top:239px;width:1px;height:12px;background:#ffffff"></div>
<div style="left:228px;top:238px;width:1px;height:1px;background:#fff"></div>
<div style="left:229px;top:251px;width:61px;height:1px;background:#808080"></div>
<div style="left:228px;top:252px;width:62px;height:1px;background:#404040"></div>
<div style="left:228px;top:251px;width:1px;height:1px;background:#808080"></div>
<span class="t" style="left:230.78px;top:237px;font-size:11px;line-height:14px;color:#000;transform:scaleX(1.0089);">Mitarbeiter</span>
<div style="left:229px;top:254px;width:61px;height:1px;background:#ffffff"></div>
<div style="left:227px;top:256px;width:1px;height:12px;background:#ffffff"></div>
<div style="left:228px;top:255px;width:1px;height:1px;background:#fff"></div>
<div style="left:229px;top:268px;width:61px;height:1px;background:#808080"></div>
<div style="left:228px;top:269px;width:62px;height:1px;background:#404040"></div>
<div style="left:228px;top:268px;width:1px;height:1px;background:#808080"></div>
<span class="t" style="left:237.78px;top:254px;font-size:11px;line-height:14px;color:#000;transform:scaleX(1.0266);">Exporte</span>
<div style="left:229px;top:271px;width:61px;height:1px;background:#ffffff"></div>
<div style="left:227px;top:273px;width:1px;height:12px;background:#ffffff"></div>
<div style="left:228px;top:272px;width:1px;height:1px;background:#fff"></div>
<div style="left:229px;top:285px;width:61px;height:1px;background:#808080"></div>
<div style="left:228px;top:286px;width:62px;height:1px;background:#404040"></div>
<div style="left:228px;top:285px;width:1px;height:1px;background:#808080"></div>
<span class="t" style="left:235.78px;top:271px;font-size:11px;line-height:14px;color:#000;transform:scaleX(1.0117);">Kontakte</span>
<div style="left:229px;top:288px;width:61px;height:1px;background:#ffffff"></div>
<div style="left:227px;top:290px;width:1px;height:12px;background:#ffffff"></div>
<div style="left:228px;top:289px;width:1px;height:1px;background:#fff"></div>
<div style="left:229px;top:302px;width:61px;height:1px;background:#808080"></div>
<div style="left:228px;top:303px;width:62px;height:1px;background:#404040"></div>
<div style="left:228px;top:302px;width:1px;height:1px;background:#808080"></div>
<span class="t" style="left:235.78px;top:288px;font-size:11px;line-height:14px;color:#000;transform:scaleX(0.9633);">Kalender</span>
<div style="left:229px;top:305px;width:61px;height:1px;background:#ffffff"></div>
<div style="left:227px;top:307px;width:1px;height:12px;background:#ffffff"></div>
<div style="left:228px;top:306px;width:1px;height:1px;background:#fff"></div>
<div style="left:229px;top:319px;width:61px;height:1px;background:#808080"></div>
<div style="left:228px;top:320px;width:62px;height:1px;background:#404040"></div>
<div style="left:228px;top:319px;width:1px;height:1px;background:#808080"></div>
<span class="t" style="left:238.78px;top:305px;font-size:11px;line-height:14px;color:#000;transform:scaleX(0.9902);">Notizen</span>
<span class="t" style="left:301.79px;top:179px;font-size:11px;line-height:14px;color:#000;font-weight:bold;transform:scaleX(1.0948);">Spezifikation der Immobilie</span>
<div style="left:461px;top:185px;width:738px;height:1px;background:#808080"></div>
<div style="left:461px;top:186px;width:738px;height:1px;background:#ffffff"></div>
<span class="t" style="left:301.79px;top:201px;font-size:11px;line-height:14px;color:#000;">Immobilienart:</span>
<span class="t" style="left:304.79px;top:305px;font-size:11px;line-height:14px;color:#000;transform:scaleX(1.0078);">Vermarktung:</span>
<div style="left:376px;top:198px;width:823px;height:21px;background:#ffffff"></div>
<div style="left:376px;top:198px;width:822px;height:1px;background:#808080"></div>
<div style="left:376px;top:198px;width:1px;height:20px;background:#808080"></div>
<div style="left:377px;top:199px;width:820px;height:1px;background:#404040"></div>
<div style="left:377px;top:199px;width:1px;height:18px;background:#404040"></div>
<div style="left:376px;top:218px;width:823px;height:1px;background:#ffffff"></div>
<div style="left:1198px;top:198px;width:1px;height:21px;background:#ffffff"></div>
<div style="left:377px;top:217px;width:821px;height:1px;background:#d4d0c8"></div>
<div style="left:1197px;top:199px;width:1px;height:19px;background:#d4d0c8"></div>
<div style="left:379px;top:201px;width:801px;height:15px;background:#c0ffd0"></div>
<div style="left:1181px;top:200px;width:16px;height:17px;background:#d4d0c8"></div>
<div style="left:1182px;top:201px;width:13px;height:1px;background:#ffffff"></div>
<div style="left:1182px;top:201px;width:1px;height:14px;background:#ffffff"></div>
<div style="left:1181px;top:216px;width:16px;height:1px;background:#404040"></div>
<div style="left:1196px;top:200px;width:1px;height:17px;background:#404040"></div>
<div style="left:1182px;top:215px;width:14px;height:1px;background:#808080"></div>
<div style="left:1195px;top:201px;width:1px;height:15px;background:#808080"></div>
<svg style="left:1181px;top:200px" width="16" height="17" viewBox="0 0 16 17"><path d="M4 6.2 H11 L7.5 9.9 Z" fill="#000"/></svg>
<span class="t" style="left:381.79px;top:201px;font-size:11px;line-height:14px;color:#000;">Gewerbeobjekt</span>
<div style="left:376px;top:224px;width:823px;height:21px;background:#ffffff"></div>
<div style="left:376px;top:224px;width:822px;height:1px;background:#808080"></div>
<div style="left:376px;top:224px;width:1px;height:20px;background:#808080"></div>
<div style="left:377px;top:225px;width:820px;height:1px;background:#404040"></div>
<div style="left:377px;top:225px;width:1px;height:18px;background:#404040"></div>
<div style="left:376px;top:244px;width:823px;height:1px;background:#ffffff"></div>
<div style="left:1198px;top:224px;width:1px;height:21px;background:#ffffff"></div>
<div style="left:377px;top:243px;width:821px;height:1px;background:#d4d0c8"></div>
<div style="left:1197px;top:225px;width:1px;height:19px;background:#d4d0c8"></div>
<div style="left:1181px;top:226px;width:16px;height:17px;background:#d4d0c8"></div>
<div style="left:1182px;top:227px;width:13px;height:1px;background:#ffffff"></div>
<div style="left:1182px;top:227px;width:1px;height:14px;background:#ffffff"></div>
<div style="left:1181px;top:242px;width:16px;height:1px;background:#404040"></div>
<div style="left:1196px;top:226px;width:1px;height:17px;background:#404040"></div>
<div style="left:1182px;top:241px;width:14px;height:1px;background:#808080"></div>
<div style="left:1195px;top:227px;width:1px;height:15px;background:#808080"></div>
<svg style="left:1181px;top:226px" width="16" height="17" viewBox="0 0 16 17"><path d="M4 6.2 H11 L7.5 9.9 Z" fill="#000"/></svg>
<span class="t" style="left:378.29px;top:227px;font-size:11px;line-height:14px;color:#000;transform:scaleX(1.0147);">[ Bitte präzisieren ]</span>
<div style="left:376px;top:250px;width:823px;height:21px;background:#d4d0c8"></div>
<div style="left:376px;top:250px;width:822px;height:1px;background:#808080"></div>
<div style="left:376px;top:250px;width:1px;height:20px;background:#808080"></div>
<div style="left:377px;top:251px;width:820px;height:1px;background:#404040"></div>
<div style="left:377px;top:251px;width:1px;height:18px;background:#404040"></div>
<div style="left:376px;top:270px;width:823px;height:1px;background:#ffffff"></div>
<div style="left:1198px;top:250px;width:1px;height:21px;background:#ffffff"></div>
<div style="left:377px;top:269px;width:821px;height:1px;background:#d4d0c8"></div>
<div style="left:1197px;top:251px;width:1px;height:19px;background:#d4d0c8"></div>
<div style="left:1181px;top:252px;width:16px;height:17px;background:#d4d0c8"></div>
<div style="left:1182px;top:253px;width:13px;height:1px;background:#ffffff"></div>
<div style="left:1182px;top:253px;width:1px;height:14px;background:#ffffff"></div>
<div style="left:1181px;top:268px;width:16px;height:1px;background:#404040"></div>
<div style="left:1196px;top:252px;width:1px;height:17px;background:#404040"></div>
<div style="left:1182px;top:267px;width:14px;height:1px;background:#808080"></div>
<div style="left:1195px;top:253px;width:1px;height:15px;background:#808080"></div>
<svg style="left:1181px;top:252px" width="16" height="17" viewBox="0 0 16 17"><path d="M5 7.2 H12 L8.5 10.9 Z" fill="#fff"/><path d="M4 6.2 H11 L7.5 9.9 Z" fill="#808080"/></svg>
<div style="left:376px;top:276px;width:823px;height:21px;background:#d4d0c8"></div>
<div style="left:376px;top:276px;width:822px;height:1px;background:#808080"></div>
<div style="left:376px;top:276px;width:1px;height:20px;background:#808080"></div>
<div style="left:377px;top:277px;width:820px;height:1px;background:#404040"></div>
<div style="left:377px;top:277px;width:1px;height:18px;background:#404040"></div>
<div style="left:376px;top:296px;width:823px;height:1px;background:#ffffff"></div>
<div style="left:1198px;top:276px;width:1px;height:21px;background:#ffffff"></div>
<div style="left:377px;top:295px;width:821px;height:1px;background:#d4d0c8"></div>
<div style="left:1197px;top:277px;width:1px;height:19px;background:#d4d0c8"></div>
<div style="left:1181px;top:278px;width:16px;height:17px;background:#d4d0c8"></div>
<div style="left:1182px;top:279px;width:13px;height:1px;background:#ffffff"></div>
<div style="left:1182px;top:279px;width:1px;height:14px;background:#ffffff"></div>
<div style="left:1181px;top:294px;width:16px;height:1px;background:#404040"></div>
<div style="left:1196px;top:278px;width:1px;height:17px;background:#404040"></div>
<div style="left:1182px;top:293px;width:14px;height:1px;background:#808080"></div>
<div style="left:1195px;top:279px;width:1px;height:15px;background:#808080"></div>
<svg style="left:1181px;top:278px" width="16" height="17" viewBox="0 0 16 17"><path d="M5 7.2 H12 L8.5 10.9 Z" fill="#fff"/><path d="M4 6.2 H11 L7.5 9.9 Z" fill="#808080"/></svg>
<div style="left:376px;top:302px;width:823px;height:21px;background:#ffffff"></div>
<div style="left:376px;top:302px;width:822px;height:1px;background:#808080"></div>
<div style="left:376px;top:302px;width:1px;height:20px;background:#808080"></div>
<div style="left:377px;top:303px;width:820px;height:1px;background:#404040"></div>
<div style="left:377px;top:303px;width:1px;height:18px;background:#404040"></div>
<div style="left:376px;top:322px;width:823px;height:1px;background:#ffffff"></div>
<div style="left:1198px;top:302px;width:1px;height:21px;background:#ffffff"></div>
<div style="left:377px;top:321px;width:821px;height:1px;background:#d4d0c8"></div>
<div style="left:1197px;top:303px;width:1px;height:19px;background:#d4d0c8"></div>
<div style="left:379px;top:305px;width:801px;height:15px;background:#c0ffd0"></div>
<div style="left:1181px;top:304px;width:16px;height:17px;background:#d4d0c8"></div>
<div style="left:1182px;top:305px;width:13px;height:1px;background:#ffffff"></div>
<div style="left:1182px;top:305px;width:1px;height:14px;background:#ffffff"></div>
<div style="left:1181px;top:320px;width:16px;height:1px;background:#404040"></div>
<div style="left:1196px;top:304px;width:1px;height:17px;background:#404040"></div>
<div style="left:1182px;top:319px;width:14px;height:1px;background:#808080"></div>
<div style="left:1195px;top:305px;width:1px;height:15px;background:#808080"></div>
<svg style="left:1181px;top:304px" width="16" height="17" viewBox="0 0 16 17"><path d="M4 6.2 H11 L7.5 9.9 Z" fill="#000"/></svg>
<span class="t" style="left:381.79px;top:305px;font-size:11px;line-height:14px;color:#000;transform:scaleX(0.9907);">Kauf</span>
<span class="t" style="left:301.79px;top:347px;font-size:11px;line-height:14px;color:#000;font-weight:bold;transform:scaleX(1.1206);">Attribute der Immobilie</span>
<div style="left:440px;top:353px;width:759px;height:1px;background:#808080"></div>
<div style="left:440px;top:354px;width:759px;height:1px;background:#ffffff"></div>
<div style="left:307px;top:372px;width:888px;height:384px;background:#ffffff"></div>
<div style="left:307px;top:372px;width:887px;height:1px;background:#808080"></div>
<div style="left:307px;top:372px;width:1px;height:383px;background:#808080"></div>
<div style="left:308px;top:373px;width:885px;height:1px;background:#404040"></div>
<div style="left:308px;top:373px;width:1px;height:381px;background:#404040"></div>
<div style="left:307px;top:755px;width:888px;height:1px;background:#ffffff"></div>
<div style="left:1194px;top:372px;width:1px;height:384px;background:#ffffff"></div>
<div style="left:308px;top:754px;width:886px;height:1px;background:#d4d0c8"></div>
<div style="left:1193px;top:373px;width:1px;height:382px;background:#d4d0c8"></div>
<div style="left:309px;top:374px;width:368px;height:19px;background:#d4d0c8"></div>
<div style="left:309px;top:374px;width:367px;height:1px;background:#ffffff"></div>
<div style="left:309px;top:374px;width:1px;height:18px;background:#ffffff"></div>
<div style="left:309px;top:392px;width:368px;height:1px;background:#404040"></div>
<div style="left:676px;top:374px;width:1px;height:19px;background:#404040"></div>
<div style="left:310px;top:391px;width:366px;height:1px;background:#808080"></div>
<div style="left:675px;top:375px;width:1px;height:17px;background:#808080"></div>
<span class="t" style="left:475.57px;top:376px;font-size:11px;line-height:14px;color:#000;">Attribut</span>
<div style="left:677px;top:374px;width:254px;height:19px;background:#d4d0c8"></div>
<div style="left:677px;top:374px;width:253px;height:1px;background:#ffffff"></div>
<div style="left:677px;top:374px;width:1px;height:18px;background:#ffffff"></div>
<div style="left:677px;top:392px;width:254px;height:1px;background:#404040"></div>
<div style="left:930px;top:374px;width:1px;height:19px;background:#404040"></div>
<div style="left:678px;top:391px;width:252px;height:1px;background:#808080"></div>
<div style="left:929px;top:375px;width:1px;height:17px;background:#808080"></div>
<span class="t" style="left:791.98px;top:376px;font-size:11px;line-height:14px;color:#000;">Wert</span>
<div style="left:931px;top:374px;width:246px;height:19px;background:#d4d0c8"></div>
<div style="left:931px;top:374px;width:245px;height:1px;background:#ffffff"></div>
<div style="left:931px;top:374px;width:1px;height:18px;background:#ffffff"></div>
<div style="left:931px;top:392px;width:246px;height:1px;background:#404040"></div>
<div style="left:1176px;top:374px;width:1px;height:19px;background:#404040"></div>
<div style="left:932px;top:391px;width:244px;height:1px;background:#808080"></div>
<div style="left:1175px;top:375px;width:1px;height:17px;background:#808080"></div>
<span class="t" style="left:1046.97px;top:376px;font-size:11px;line-height:14px;color:#000;">Art</span>
<div style="left:1177px;top:374px;width:16px;height:19px;background:#d4d0c8"></div>
<div style="left:309px;top:410px;width:868px;height:1px;background:#d4d0c8"></div>
<div style="left:313px;top:398px;width:9px;height:9px;background:#fff;border:1px solid #808080;box-sizing:border-box"></div>
<div style="left:315px;top:402px;width:5px;height:1px;background:#000"></div>
<svg style="left:328px;top:394px" width="17" height="15" viewBox="0 0 17 15"><defs><linearGradient id="g7" x1="0" y1="0" x2="0" y2="1"><stop offset="0" stop-color="#fffbd0"/><stop offset="1" stop-color="#f6cc50"/></linearGradient></defs>
<path d="M2.4 13.4 Q15 14.4 15.6 8" stroke="#8088a0" stroke-opacity="0.55" stroke-width="1.2" fill="none"/>
<path d="M0.7 3 Q0.7 1.2 2.4 1.2 H5.8 Q7 1.2 7.6 2.6 H12.6 Q14.3 2.6 14.3 4.4 V11 Q14.3 12.4 12.8 12.4 H2.4 Q0.7 12.4 0.7 10.8 Z" fill="#f4cc58" stroke="#a87c10" stroke-width="1"/>
<path d="M2.2 2.2 H5.6" stroke="#fff4b8" stroke-width="0.9"/>
<path d="M3.6 6 H14.4 Q15.6 6 15.3 7.2 L14 11.4 Q13.7 12.4 12.6 12.4 H2.2 Q1 12.4 1.4 11.2 L2.6 7 Q2.9 6 3.6 6 Z" fill="url(#g7)" stroke="#a87c10" stroke-width="1"/></svg>
<span class="t" style="left:346.79px;top:395px;font-size:11px;line-height:14px;color:#000;font-weight:bold;transform:scaleX(1.0772);">Pflichtangaben</span>
<div style="left:309px;top:411px;width:868px;height:17px;background:#f5f5dc"></div>
<div style="left:309px;top:428px;width:868px;height:1px;background:#d4d0c8"></div>
<svg style="left:349px;top:412px" width="14" height="17" viewBox="0 0 14 17"><path d="M0.5 0.5 H9 L12.5 4 V15.5 H0.5 Z" fill="#fff"/><path d="M0.5 15.5 V0.5 H9" fill="none" stroke="#808080" stroke-width="1"/><path d="M9 0.5 L12.5 4.3" fill="none" stroke="#404040" stroke-width="1"/><path d="M9.2 1 V4.2 H12.4" fill="none" stroke="#000" stroke-width="0.9"/><path d="M12.5 4 V15.6" stroke="#000" stroke-width="1"/><path d="M0 15.5 H13.1" stroke="#000" stroke-width="1.5"/></svg>
<span class="t" style="left:365.79px;top:413px;font-size:11px;line-height:14px;color:#000;transform:scaleX(1.0058);"><u>Gewerbefläche </u></span>
<span class="t" style="left:677px;top:412px;font-size:11px;line-height:14px;color:#000;">0</span>
<span class="t" style="left:931.28px;top:412px;font-size:11px;line-height:14px;color:#000;font-style:italic;transform:scaleX(0.9698);">beliebige Zahl</span>
<div style="left:309px;top:446px;width:868px;height:1px;background:#d4d0c8"></div>
<svg style="left:349px;top:430px" width="14" height="17" viewBox="0 0 14 17"><path d="M0.5 0.5 H9 L12.5 4 V15.5 H0.5 Z" fill="#fff"/><path d="M0.5 15.5 V0.5 H9" fill="none" stroke="#808080" stroke-width="1"/><path d="M9 0.5 L12.5 4.3" fill="none" stroke="#404040" stroke-width="1"/><path d="M9.2 1 V4.2 H12.4" fill="none" stroke="#000" stroke-width="0.9"/><path d="M12.5 4 V15.6" stroke="#000" stroke-width="1"/><path d="M0 15.5 H13.1" stroke="#000" stroke-width="1.5"/></svg>
<span class="t" style="left:365.79px;top:431px;font-size:11px;line-height:14px;color:#000;transform:scaleX(1.0203);"><u>Kaufpreis </u></span>
<span class="t" style="left:677px;top:430px;font-size:11px;line-height:14px;color:#000;">0</span>
<span class="t" style="left:931.28px;top:430px;font-size:11px;line-height:14px;color:#000;font-style:italic;transform:scaleX(0.9698);">beliebige Zahl</span>
<div style="left:309px;top:447px;width:868px;height:17px;background:#f5f5dc"></div>
<div style="left:309px;top:464px;width:868px;height:1px;background:#d4d0c8"></div>
<div style="left:313px;top:452px;width:9px;height:9px;background:#fff;border:1px solid #808080;box-sizing:border-box"></div>
<div style="left:315px;top:456px;width:5px;height:1px;background:#000"></div>
<svg style="left:328px;top:448px" width="17" height="15" viewBox="0 0 17 15"><defs><linearGradient id="g8" x1="0" y1="0" x2="0" y2="1"><stop offset="0" stop-color="#fffbd0"/><stop offset="1" stop-color="#f6cc50"/></linearGradient></defs>
<path d="M2.4 13.4 Q15 14.4 15.6 8" stroke="#8088a0" stroke-opacity="0.55" stroke-width="1.2" fill="none"/>
<path d="M0.7 3 Q0.7 1.2 2.4 1.2 H5.8 Q7 1.2 7.6 2.6 H12.6 Q14.3 2.6 14.3 4.4 V11 Q14.3 12.4 12.8 12.4 H2.4 Q0.7 12.4 0.7 10.8 Z" fill="#f4cc58" stroke="#a87c10" stroke-width="1"/>
<path d="M2.2 2.2 H5.6" stroke="#fff4b8" stroke-width="0.9"/>
<path d="M3.6 6 H14.4 Q15.6 6 15.3 7.2 L14 11.4 Q13.7 12.4 12.6 12.4 H2.2 Q1 12.4 1.4 11.2 L2.6 7 Q2.9 6 3.6 6 Z" fill="url(#g8)" stroke="#a87c10" stroke-width="1"/></svg>
<span class="t" style="left:346.79px;top:449px;font-size:11px;line-height:14px;color:#000;font-weight:bold;transform:scaleX(1.1053);">Ausstattung</span>
<div style="left:309px;top:482px;width:868px;height:1px;background:#d4d0c8"></div>
<svg style="left:349px;top:466px" width="14" height="17" viewBox="0 0 14 17"><path d="M0.5 0.5 H9 L12.5 4 V15.5 H0.5 Z" fill="#fff"/><path d="M0.5 15.5 V0.5 H9" fill="none" stroke="#808080" stroke-width="1"/><path d="M9 0.5 L12.5 4.3" fill="none" stroke="#404040" stroke-width="1"/><path d="M9.2 1 V4.2 H12.4" fill="none" stroke="#000" stroke-width="0.9"/><path d="M12.5 4 V15.6" stroke="#000" stroke-width="1"/><path d="M0 15.5 H13.1" stroke="#000" stroke-width="1.5"/></svg>
<span class="t" style="left:365.79px;top:467px;font-size:11px;line-height:14px;color:#000;">Befeuerung</span>
<span class="t" style="left:676.28px;top:466px;font-size:11px;line-height:14px;color:#000;transform:scaleX(0.9785);">Fernwärme</span>
<span class="t" style="left:931.28px;top:466px;font-size:11px;line-height:14px;color:#000;font-style:italic;transform:scaleX(0.9959);">Auswahl (mehrfach)</span>
<div style="left:309px;top:483px;width:868px;height:17px;background:#f5f5dc"></div>
<div style="left:309px;top:500px;width:868px;height:1px;background:#d4d0c8"></div>
<svg style="left:349px;top:484px" width="14" height="17" viewBox="0 0 14 17"><path d="M0.5 0.5 H9 L12.5 4 V15.5 H0.5 Z" fill="#fff"/><path d="M0.5 15.5 V0.5 H9" fill="none" stroke="#808080" stroke-width="1"/><path d="M9 0.5 L12.5 4.3" fill="none" stroke="#404040" stroke-width="1"/><path d="M9.2 1 V4.2 H12.4" fill="none" stroke="#000" stroke-width="0.9"/><path d="M12.5 4 V15.6" stroke="#000" stroke-width="1"/><path d="M0 15.5 H13.1" stroke="#000" stroke-width="1.5"/></svg>
<span class="t" style="left:365.79px;top:485px;font-size:11px;line-height:14px;color:#000;transform:scaleX(0.9693);">Bodenbelag</span>
<span class="t" style="left:676.28px;top:484px;font-size:11px;line-height:14px;color:#000;transform:scaleX(0.9563);">Laminat</span>
<span class="t" style="left:931.28px;top:484px;font-size:11px;line-height:14px;color:#000;font-style:italic;transform:scaleX(0.9959);">Auswahl (mehrfach)</span>
<div style="left:309px;top:518px;width:868px;height:1px;background:#d4d0c8"></div>
<svg style="left:349px;top:502px" width="14" height="17" viewBox="0 0 14 17"><path d="M0.5 0.5 H9 L12.5 4 V15.5 H0.5 Z" fill="#fff"/><path d="M0.5 15.5 V0.5 H9" fill="none" stroke="#808080" stroke-width="1"/><path d="M9 0.5 L12.5 4.3" fill="none" stroke="#404040" stroke-width="1"/><path d="M9.2 1 V4.2 H12.4" fill="none" stroke="#000" stroke-width="0.9"/><path d="M12.5 4 V15.6" stroke="#000" stroke-width="1"/><path d="M0 15.5 H13.1" stroke="#000" stroke-width="1.5"/></svg>
<span class="t" style="left:365.79px;top:503px;font-size:11px;line-height:14px;color:#000;transform:scaleX(0.9871);">Breitband-Zugang</span>
<span class="t" style="left:676.28px;top:502px;font-size:11px;line-height:14px;color:#000;transform:scaleX(0.9820);">asd</span>
<span class="t" style="left:931.28px;top:502px;font-size:11px;line-height:14px;color:#000;font-style:italic;transform:scaleX(1.1245);">Text</span>
<div style="left:309px;top:519px;width:868px;height:17px;background:#f5f5dc"></div>
<div style="left:309px;top:536px;width:868px;height:1px;background:#d4d0c8"></div>
<svg style="left:349px;top:520px" width="14" height="17" viewBox="0 0 14 17"><path d="M0.5 0.5 H9 L12.5 4 V15.5 H0.5 Z" fill="#fff"/><path d="M0.5 15.5 V0.5 H9" fill="none" stroke="#808080" stroke-width="1"/><path d="M9 0.5 L12.5 4.3" fill="none" stroke="#404040" stroke-width="1"/><path d="M9.2 1 V4.2 H12.4" fill="none" stroke="#000" stroke-width="0.9"/><path d="M12.5 4 V15.6" stroke="#000" stroke-width="1"/><path d="M0 15.5 H13.1" stroke="#000" stroke-width="1.5"/></svg>
<span class="t" style="left:365.79px;top:521px;font-size:11px;line-height:14px;color:#000;transform:scaleX(0.9700);">Breitband-Geschwindigkeit</span>
<span class="t" style="left:676.28px;top:520px;font-size:11px;line-height:14px;color:#000;transform:scaleX(1.0230);">23.423</span>
<span class="t" style="left:931.28px;top:520px;font-size:11px;line-height:14px;color:#000;font-style:italic;transform:scaleX(0.9815);">ganze Zahl</span>
<div style="left:309px;top:554px;width:868px;height:1px;background:#d4d0c8"></div>
<svg style="left:349px;top:538px" width="14" height="17" viewBox="0 0 14 17"><path d="M0.5 0.5 H9 L12.5 4 V15.5 H0.5 Z" fill="#fff"/><path d="M0.5 15.5 V0.5 H9" fill="none" stroke="#808080" stroke-width="1"/><path d="M9 0.5 L12.5 4.3" fill="none" stroke="#404040" stroke-width="1"/><path d="M9.2 1 V4.2 H12.4" fill="none" stroke="#000" stroke-width="0.9"/><path d="M12.5 4 V15.6" stroke="#000" stroke-width="1"/><path d="M0 15.5 H13.1" stroke="#000" stroke-width="1.5"/></svg>
<span class="t" style="left:365.79px;top:539px;font-size:11px;line-height:14px;color:#000;transform:scaleX(0.9739);">Gesamtetagenzahl</span>
<span class="t" style="left:676.28px;top:538px;font-size:11px;line-height:14px;color:#000;transform:scaleX(1.0206);">783.783.808</span>
<span class="t" style="left:931.28px;top:538px;font-size:11px;line-height:14px;color:#000;font-style:italic;transform:scaleX(0.9815);">ganze Zahl</span>
<div style="left:309px;top:555px;width:367px;height:17px;background:#0a246a"></div>
<div style="left:931px;top:555px;width:245px;height:17px;background:#0a246a"></div>
<div style="left:309px;top:572px;width:868px;height:1px;background:#d4d0c8"></div>
<svg style="left:349px;top:556px" width="14" height="17" viewBox="0 0 14 17"><path d="M0.5 0.5 H9 L12.5 4 V15.5 H0.5 Z" fill="#fff"/><path d="M0.5 15.5 V0.5 H9" fill="none" stroke="#808080" stroke-width="1"/><path d="M9 0.5 L12.5 4.3" fill="none" stroke="#404040" stroke-width="1"/><path d="M9.2 1 V4.2 H12.4" fill="none" stroke="#000" stroke-width="0.9"/><path d="M12.5 4 V15.6" stroke="#000" stroke-width="1"/><path d="M0 15.5 H13.1" stroke="#000" stroke-width="1.5"/></svg>
<span class="t" style="left:365.79px;top:557px;font-size:11px;line-height:14px;color:#fff;transform:scaleX(0.9800);">Heizungsart</span>
<span class="t" style="left:931.28px;top:556px;font-size:11px;line-height:14px;color:#fff;font-style:italic;transform:scaleX(0.9959);">Auswahl (mehrfach)</span>
<div style="left:309px;top:590px;width:868px;height:1px;background:#d4d0c8"></div>
<svg style="left:349px;top:574px" width="14" height="17" viewBox="0 0 14 17"><path d="M0.5 0.5 H9 L12.5 4 V15.5 H0.5 Z" fill="#fff"/><path d="M0.5 15.5 V0.5 H9" fill="none" stroke="#808080" stroke-width="1"/><path d="M9 0.5 L12.5 4.3" fill="none" stroke="#404040" stroke-width="1"/><path d="M9.2 1 V4.2 H12.4" fill="none" stroke="#000" stroke-width="0.9"/><path d="M12.5 4 V15.6" stroke="#000" stroke-width="1"/><path d="M0 15.5 H13.1" stroke="#000" stroke-width="1.5"/></svg>
<span class="t" style="left:365.79px;top:575px;font-size:11px;line-height:14px;color:#000;transform:scaleX(0.9397);">Keller</span>
<span class="t" style="left:676.28px;top:574px;font-size:11px;line-height:14px;color:#000;transform:scaleX(0.9824);">nein</span>
<span class="t" style="left:931.28px;top:574px;font-size:11px;line-height:14px;color:#000;font-style:italic;transform:scaleX(1.0196);">Auswahl (ja/nein)</span>
<div style="left:309px;top:591px;width:868px;height:17px;background:#f5f5dc"></div>
<div style="left:309px;top:608px;width:868px;height:1px;background:#d4d0c8"></div>
<svg style="left:349px;top:592px" width="14" height="17" viewBox="0 0 14 17"><path d="M0.5 0.5 H9 L12.5 4 V15.5 H0.5 Z" fill="#fff"/><path d="M0.5 15.5 V0.5 H9" fill="none" stroke="#808080" stroke-width="1"/><path d="M9 0.5 L12.5 4.3" fill="none" stroke="#404040" stroke-width="1"/><path d="M9.2 1 V4.2 H12.4" fill="none" stroke="#000" stroke-width="0.9"/><path d="M12.5 4 V15.6" stroke="#000" stroke-width="1"/><path d="M0 15.5 H13.1" stroke="#000" stroke-width="1.5"/></svg>
<span class="t" style="left:365.79px;top:593px;font-size:11px;line-height:14px;color:#000;transform:scaleX(0.9849);">Sicherheitstechnik</span>
<span class="t" style="left:676.28px;top:592px;font-size:11px;line-height:14px;color:#000;transform:scaleX(0.9624);">Alarman</span>
<span class="t" style="left:931.28px;top:592px;font-size:11px;line-height:14px;color:#000;font-style:italic;transform:scaleX(0.9959);">Auswahl (mehrfach)</span>
<div style="left:309px;top:626px;width:868px;height:1px;background:#d4d0c8"></div>
<svg style="left:349px;top:610px" width="14" height="17" viewBox="0 0 14 17"><path d="M0.5 0.5 H9 L12.5 4 V15.5 H0.5 Z" fill="#fff"/><path d="M0.5 15.5 V0.5 H9" fill="none" stroke="#808080" stroke-width="1"/><path d="M9 0.5 L12.5 4.3" fill="none" stroke="#404040" stroke-width="1"/><path d="M9.2 1 V4.2 H12.4" fill="none" stroke="#000" stroke-width="0.9"/><path d="M12.5 4 V15.6" stroke="#000" stroke-width="1"/><path d="M0 15.5 H13.1" stroke="#000" stroke-width="1.5"/></svg>
<span class="t" style="left:365.79px;top:611px;font-size:11px;line-height:14px;color:#000;transform:scaleX(1.0170);">Technik</span>
<span class="t" style="left:676.28px;top:610px;font-size:11px;line-height:14px;color:#000;transform:scaleX(0.9150);">DV-Verk</span>
<span class="t" style="left:931.28px;top:610px;font-size:11px;line-height:14px;color:#000;font-style:italic;transform:scaleX(0.9959);">Auswahl (mehrfach)</span>
<div style="left:309px;top:627px;width:868px;height:17px;background:#f5f5dc"></div>
<div style="left:309px;top:644px;width:868px;height:1px;background:#d4d0c8"></div>
<svg style="left:349px;top:628px" width="14" height="17" viewBox="0 0 14 17"><path d="M0.5 0.5 H9 L12.5 4 V15.5 H0.5 Z" fill="#fff"/><path d="M0.5 15.5 V0.5 H9" fill="none" stroke="#808080" stroke-width="1"/><path d="M9 0.5 L12.5 4.3" fill="none" stroke="#404040" stroke-width="1"/><path d="M9.2 1 V4.2 H12.4" fill="none" stroke="#000" stroke-width="0.9"/><path d="M12.5 4 V15.6" stroke="#000" stroke-width="1"/><path d="M0 15.5 H13.1" stroke="#000" stroke-width="1.5"/></svg>
<span class="t" style="left:365.79px;top:629px;font-size:11px;line-height:14px;color:#000;transform:scaleX(0.9797);">Verglasung</span>
<span class="t" style="left:676.28px;top:628px;font-size:11px;line-height:14px;color:#000;transform:scaleX(0.9471);">Sonnen</span>
<span class="t" style="left:931.28px;top:628px;font-size:11px;line-height:14px;color:#000;font-style:italic;transform:scaleX(0.9959);">Auswahl (mehrfach)</span>
<div style="left:309px;top:662px;width:868px;height:1px;background:#d4d0c8"></div>
<div style="left:313px;top:650px;width:9px;height:9px;background:#fff;border:1px solid #808080;box-sizing:border-box"></div>
<div style="left:315px;top:654px;width:5px;height:1px;background:#000"></div>
<svg style="left:328px;top:646px" width="17" height="15" viewBox="0 0 17 15"><defs><linearGradient id="g9" x1="0" y1="0" x2="0" y2="1"><stop offset="0" stop-color="#fffbd0"/><stop offset="1" stop-color="#f6cc50"/></linearGradient></defs>
<path d="M2.4 13.4 Q15 14.4 15.6 8" stroke="#8088a0" stroke-opacity="0.55" stroke-width="1.2" fill="none"/>
<path d="M0.7 3 Q0.7 1.2 2.4 1.2 H5.8 Q7 1.2 7.6 2.6 H12.6 Q14.3 2.6 14.3 4.4 V11 Q14.3 12.4 12.8 12.4 H2.4 Q0.7 12.4 0.7 10.8 Z" fill="#f4cc58" stroke="#a87c10" stroke-width="1"/>
<path d="M2.2 2.2 H5.6" stroke="#fff4b8" stroke-width="0.9"/>
<path d="M3.6 6 H14.4 Q15.6 6 15.3 7.2 L14 11.4 Q13.7 12.4 12.6 12.4 H2.2 Q1 12.4 1.4 11.2 L2.6 7 Q2.9 6 3.6 6 Z" fill="url(#g9)" stroke="#a87c10" stroke-width="1"/></svg>
<span class="t" style="left:346.79px;top:647px;font-size:11px;line-height:14px;color:#000;font-weight:bold;transform:scaleX(1.0566);">Flächen</span>
<div style="left:309px;top:663px;width:868px;height:17px;background:#f5f5dc"></div>
<div style="left:309px;top:680px;width:868px;height:1px;background:#d4d0c8"></div>
<svg style="left:349px;top:664px" width="14" height="17" viewBox="0 0 14 17"><path d="M0.5 0.5 H9 L12.5 4 V15.5 H0.5 Z" fill="#fff"/><path d="M0.5 15.5 V0.5 H9" fill="none" stroke="#808080" stroke-width="1"/><path d="M9 0.5 L12.5 4.3" fill="none" stroke="#404040" stroke-width="1"/><path d="M9.2 1 V4.2 H12.4" fill="none" stroke="#000" stroke-width="0.9"/><path d="M12.5 4 V15.6" stroke="#000" stroke-width="1"/><path d="M0 15.5 H13.1" stroke="#000" stroke-width="1.5"/></svg>
<span class="t" style="left:365.79px;top:665px;font-size:11px;line-height:14px;color:#000;transform:scaleX(0.9711);">Anzahl Stellplätze</span>
<span class="t" style="left:676.28px;top:664px;font-size:11px;line-height:14px;color:#000;transform:scaleX(1.0147);">78</span>
<span class="t" style="left:931.28px;top:664px;font-size:11px;line-height:14px;color:#000;font-style:italic;transform:scaleX(0.9815);">ganze Zahl</span>
<div style="left:309px;top:698px;width:868px;height:1px;background:#d4d0c8"></div>
<svg style="left:349px;top:682px" width="14" height="17" viewBox="0 0 14 17"><path d="M0.5 0.5 H9 L12.5 4 V15.5 H0.5 Z" fill="#fff"/><path d="M0.5 15.5 V0.5 H9" fill="none" stroke="#808080" stroke-width="1"/><path d="M9 0.5 L12.5 4.3" fill="none" stroke="#404040" stroke-width="1"/><path d="M9.2 1 V4.2 H12.4" fill="none" stroke="#000" stroke-width="0.9"/><path d="M12.5 4 V15.6" stroke="#000" stroke-width="1"/><path d="M0 15.5 H13.1" stroke="#000" stroke-width="1.5"/></svg>
<span class="t" style="left:365.79px;top:683px;font-size:11px;line-height:14px;color:#000;transform:scaleX(0.9874);">Bürofläche</span>
<span class="t" style="left:676.28px;top:682px;font-size:11px;line-height:14px;color:#000;transform:scaleX(1.0326);">7.899</span>
<span class="t" style="left:931.28px;top:682px;font-size:11px;line-height:14px;color:#000;font-style:italic;transform:scaleX(0.9698);">beliebige Zahl</span>
<div style="left:309px;top:699px;width:868px;height:17px;background:#f5f5dc"></div>
<div style="left:309px;top:716px;width:868px;height:1px;background:#d4d0c8"></div>
<svg style="left:349px;top:700px" width="14" height="17" viewBox="0 0 14 17"><path d="M0.5 0.5 H9 L12.5 4 V15.5 H0.5 Z" fill="#fff"/><path d="M0.5 15.5 V0.5 H9" fill="none" stroke="#808080" stroke-width="1"/><path d="M9 0.5 L12.5 4.3" fill="none" stroke="#404040" stroke-width="1"/><path d="M9.2 1 V4.2 H12.4" fill="none" stroke="#000" stroke-width="0.9"/><path d="M12.5 4 V15.6" stroke="#000" stroke-width="1"/><path d="M0 15.5 H13.1" stroke="#000" stroke-width="1.5"/></svg>
<span class="t" style="left:365.79px;top:701px;font-size:11px;line-height:14px;color:#000;transform:scaleX(0.9713);">Gesamtfläche</span>
<span class="t" style="left:676.28px;top:700px;font-size:11px;line-height:14px;color:#000;transform:scaleX(1.0305);">6.786.787</span>
<span class="t" style="left:931.28px;top:700px;font-size:11px;line-height:14px;color:#000;font-style:italic;transform:scaleX(0.9698);">beliebige Zahl</span>
<div style="left:309px;top:734px;width:868px;height:1px;background:#d4d0c8"></div>
<svg style="left:349px;top:718px" width="14" height="17" viewBox="0 0 14 17"><path d="M0.5 0.5 H9 L12.5 4 V15.5 H0.5 Z" fill="#fff"/><path d="M0.5 15.5 V0.5 H9" fill="none" stroke="#808080" stroke-width="1"/><path d="M9 0.5 L12.5 4.3" fill="none" stroke="#404040" stroke-width="1"/><path d="M9.2 1 V4.2 H12.4" fill="none" stroke="#000" stroke-width="0.9"/><path d="M12.5 4 V15.6" stroke="#000" stroke-width="1"/><path d="M0 15.5 H13.1" stroke="#000" stroke-width="1.5"/></svg>
<span class="t" style="left:365.79px;top:719px;font-size:11px;line-height:14px;color:#000;transform:scaleX(0.9730);">Kellerfläche</span>
<span class="t" style="left:676.28px;top:718px;font-size:11px;line-height:14px;color:#000;transform:scaleX(1.0294);">5.326.452.736</span>
<span class="t" style="left:931.28px;top:718px;font-size:11px;line-height:14px;color:#000;font-style:italic;transform:scaleX(0.9698);">beliebige Zahl</span>
<div style="left:309px;top:735px;width:868px;height:17px;background:#f5f5dc"></div>
<div style="left:309px;top:752px;width:868px;height:1px;background:#d4d0c8"></div>
<svg style="left:349px;top:736px" width="14" height="17" viewBox="0 0 14 17"><path d="M0.5 0.5 H9 L12.5 4 V15.5 H0.5 Z" fill="#fff"/><path d="M0.5 15.5 V0.5 H9" fill="none" stroke="#808080" stroke-width="1"/><path d="M9 0.5 L12.5 4.3" fill="none" stroke="#404040" stroke-width="1"/><path d="M9.2 1 V4.2 H12.4" fill="none" stroke="#000" stroke-width="0.9"/><path d="M12.5 4 V15.6" stroke="#000" stroke-width="1"/><path d="M0 15.5 H13.1" stroke="#000" stroke-width="1.5"/></svg>
<span class="t" style="left:365.79px;top:737px;font-size:11px;line-height:14px;color:#000;transform:scaleX(0.9901);">Lagerfläche</span>
<span class="t" style="left:676.28px;top:736px;font-size:11px;line-height:14px;color:#000;transform:scaleX(1.0261);">26.378.466.492.416</span>
<span class="t" style="left:931.28px;top:736px;font-size:11px;line-height:14px;color:#000;font-style:italic;transform:scaleX(0.9698);">beliebige Zahl</span>
<div style="left:309px;top:753px;width:868px;height:1px;background:#fff"></div>
<div style="left:676px;top:393px;width:1px;height:361px;background:#d4d0c8"></div>
<div style="left:930px;top:393px;width:1px;height:361px;background:#d4d0c8"></div>
<div style="left:1176px;top:393px;width:1px;height:361px;background:#d4d0c8"></div>
<div style="left:677px;top:555px;width:253px;height:18px;background:#fff"></div>
<div style="left:677px;top:571px;width:253px;height:1px;background:#8c8c8c"></div>
<div style="left:677px;top:572px;width:253px;height:1px;background:#c4c2bc"></div>
<div style="left:929px;top:555px;width:1px;height:17px;background:#8c8c8c"></div>
<span class="t" style="left:678.28px;top:556px;font-size:11px;line-height:14px;color:#000;transform:scaleX(0.9753);">Zentralheizung, Fußbodenheizung</span>
<div style="left:1177px;top:393px;width:16px;height:361px;background:repeating-conic-gradient(#fff 0 25%,#d4d0c8 0 50%) 0 0/2px 2px"></div>
<div style="left:1177px;top:393px;width:16px;height:16px;background:#d4d0c8"></div>
<div style="left:1178px;top:394px;width:13px;height:1px;background:#ffffff"></div>
<div style="left:1178px;top:394px;width:1px;height:13px;background:#ffffff"></div>
<div style="left:1177px;top:408px;width:16px;height:1px;background:#404040"></div>
<div style="left:1192px;top:393px;width:1px;height:16px;background:#404040"></div>
<div style="left:1178px;top:407px;width:14px;height:1px;background:#808080"></div>
<div style="left:1191px;top:394px;width:1px;height:14px;background:#808080"></div>
<svg style="left:1177px;top:393px" width="16" height="16" viewBox="0 0 16 16"><path d="M4 10 H11 L7.5 6.2 Z" fill="#000"/></svg>
<div style="left:1177px;top:738px;width:16px;height:16px;background:#d4d0c8"></div>
<div style="left:1178px;top:739px;width:13px;height:1px;background:#ffffff"></div>
<div style="left:1178px;top:739px;width:1px;height:13px;background:#ffffff"></div>
<div style="left:1177px;top:753px;width:16px;height:1px;background:#404040"></div>
<div style="left:1192px;top:738px;width:1px;height:16px;background:#404040"></div>
<div style="left:1178px;top:752px;width:14px;height:1px;background:#808080"></div>
<div style="left:1191px;top:739px;width:1px;height:14px;background:#808080"></div>
<svg style="left:1177px;top:738px" width="16" height="16" viewBox="0 0 16 16"><path d="M4 6.3 H11 L7.5 10.1 Z" fill="#000"/></svg>
<div style="left:1177px;top:409px;width:16px;height:88px;background:#d4d0c8"></div>
<div style="left:1178px;top:410px;width:13px;height:1px;background:#ffffff"></div>
<div style="left:1178px;top:410px;width:1px;height:85px;background:#ffffff"></div>
<div style="left:1177px;top:496px;width:16px;height:1px;background:#404040"></div>
<div style="left:1192px;top:409px;width:1px;height:88px;background:#404040"></div>
<div style="left:1178px;top:495px;width:14px;height:1px;background:#808080"></div>
<div style="left:1191px;top:410px;width:1px;height:86px;background:#808080"></div>
<div style="left:713px;top:572px;width:149px;height:106px;background:#d4d0c8;box-shadow:2px 2px 3px rgba(0,0,0,0.45)"></div>
<div style="left:714px;top:573px;width:146px;height:1px;background:#efede8"></div>
<div style="left:714px;top:573px;width:1px;height:103px;background:#efede8"></div>
<div style="left:713px;top:677px;width:149px;height:1px;background:#6c6c6c"></div>
<div style="left:861px;top:572px;width:1px;height:106px;background:#6c6c6c"></div>
<div style="left:715px;top:680px;width:150px;height:2px;background:rgba(0,0,0,0)"></div>
<div style="left:716px;top:655px;width:143px;height:20px;background:#0a246a"></div>
<span class="t" style="left:738.78px;top:578px;font-size:11px;line-height:14px;color:#000;transform:scaleX(1.0449);">Ofen</span>
<span class="t" style="left:738.78px;top:598px;font-size:11px;line-height:14px;color:#000;transform:scaleX(0.9883);">Zentralheizung</span>
<svg style="left:721px;top:600px" width="9" height="9" viewBox="0 0 9 9"><path d="M1 4 L3.4 6.6 L8 1.6" fill="none" stroke="#000" stroke-width="1.7"/></svg>
<span class="t" style="left:738.78px;top:618px;font-size:11px;line-height:14px;color:#000;transform:scaleX(0.9799);">Etagenheizung</span>
<span class="t" style="left:738.78px;top:638px;font-size:11px;line-height:14px;color:#000;transform:scaleX(0.9745);">Fußbodenheizung</span>
<svg style="left:721px;top:640px" width="9" height="9" viewBox="0 0 9 9"><path d="M1 4 L3.4 6.6 L8 1.6" fill="none" stroke="#000" stroke-width="1.7"/></svg>
<span class="t" style="left:738.78px;top:658px;font-size:11px;line-height:14px;color:#fff;transform:scaleX(0.9875);">Fernwärme</span>
</body></html>
